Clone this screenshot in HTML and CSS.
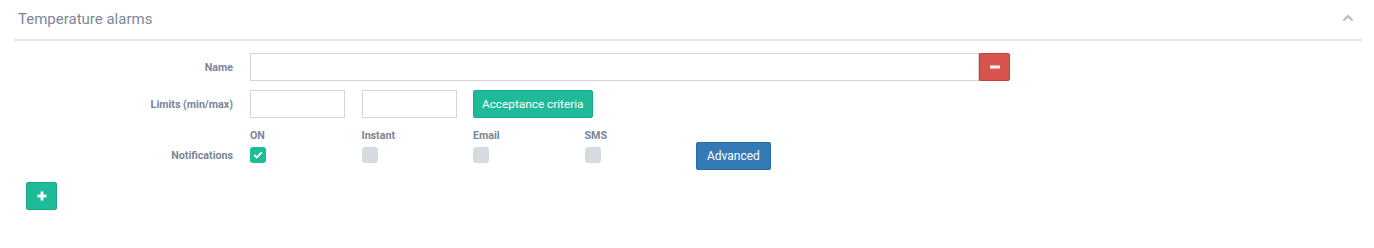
FILE: index.html
```html
<!DOCTYPE html>
<html lang="en">
<head>
    <meta charset="UTF-8">
    <title>Temperature alarms</title>
    <link rel="stylesheet" href="styles.css">
</head>
<body>
    <div class="panel">
        <div class="panel-header">
            <span class="panel-title">Temperature alarms</span>
            <svg class="chevron" width="12" height="8" viewBox="0 0 12 8"><path d="M1.5 6.5 L6 2 L10.5 6.5" fill="none" stroke="#b8bec6" stroke-width="2.2"/></svg>
        </div>

        <div class="alarm">
            <div class="form-row">
                <label class="row-label">Name</label>
                <div class="input-group">
                    <input type="text" class="name-input">
                    <button class="btn btn-danger btn-icon">
                        <svg width="12" height="12" viewBox="0 0 12 12"><rect x="1" y="4.5" width="10" height="3" fill="#fff"/></svg>
                    </button>
                </div>
            </div>

            <div class="form-row">
                <label class="row-label">Limits (min/max)</label>
                <div class="cols">
                    <input type="text" class="small-input">
                    <input type="text" class="small-input">
                    <button class="btn btn-success btn-criteria">Acceptance criteria</button>
                </div>
            </div>

            <div class="form-row notif-row">
                <label class="row-label">Notifications</label>
                <div class="cols">
                    <div class="check-col">
                        <span class="check-title">ON</span>
                        <span class="checkbox checked">
                            <svg width="10" height="8" viewBox="0 0 10 8"><path d="M1.2 4 L3.8 6.4 L8.8 1.4" fill="none" stroke="#fff" stroke-width="1.8"/></svg>
                        </span>
                    </div>
                    <div class="check-col">
                        <span class="check-title">Instant</span>
                        <span class="checkbox"></span>
                    </div>
                    <div class="check-col">
                        <span class="check-title">Email</span>
                        <span class="checkbox"></span>
                    </div>
                    <div class="check-col">
                        <span class="check-title">SMS</span>
                        <span class="checkbox"></span>
                    </div>
                    <div class="check-col advanced-col">
                        <button class="btn btn-primary">Advanced</button>
                    </div>
                </div>
            </div>
        </div>

        <button class="btn btn-success btn-icon add-btn">
            <svg width="12" height="12" viewBox="0 0 12 12"><rect x="1.5" y="4.6" width="9" height="2.8" fill="#fff"/><rect x="4.6" y="1.5" width="2.8" height="9" fill="#fff"/></svg>
        </button>
    </div>
</body>
</html>
```

FILE: styles.css
```css
body {
    margin: 0;
    font-family: Roboto, "Liberation Sans", sans-serif;
    background: #fff;
    color: #333;
}
.panel {
    margin: 0 12px 0 14px;
}
.panel-header {
    display: flex;
    align-items: center;
    justify-content: space-between;
    height: 39px;
    border-bottom: 2px solid #e7e8ef;
    padding: 0 8px 0 4px;
}
.panel-title {
    font-size: 15px;
    color: #7b8898;
    margin-top: -1px;
}
.chevron {
    margin-top: -3px;
}
.alarm {
    padding-top: 12px;
}
.form-row {
    display: flex;
    align-items: center;
    margin-bottom: 9px;
}
.row-label {
    width: 219px;
    margin-right: 17px;
    padding-top: 1px;
    text-align: right;
    font-size: 10.7px;
    font-weight: bold;
    color: #7a8595;
}
.input-group {
    display: flex;
}
input {
    box-sizing: border-box;
    height: 28px;
    border: 1px solid #d5d5d5;
    padding: 4px 8px;
    font-family: inherit;
    outline: none;
}
.name-input {
    width: 729px;
}
.small-input {
    width: 95px;
}
.cols {
    display: grid;
    grid-template-columns: repeat(5, 95.5px);
    column-gap: 16px;
    align-items: center;
}
.cols > .btn {
    justify-self: start;
}
.btn {
    box-sizing: border-box;
    height: 28px;
    border: none;
    border-radius: 2px;
    padding: 0 10px;
    font-family: inherit;
    font-size: 12px;
    color: #fff;
    cursor: pointer;
    white-space: nowrap;
}
.btn-criteria {
    padding: 0 8px;
    font-size: 11.8px;
}
.btn-success {
    background-color: #1fbb99;
    border: 1px solid #19a889;
}
.btn-danger {
    background-color: #d9534f;
    border: 1px solid #c9403c;
}
.btn-primary {
    background-color: #337ab7;
    border: 1px solid #2a6aa2;
}
.btn-icon {
    width: 31px;
    min-height: 28px;
    padding: 0;
    display: flex;
    align-items: center;
    justify-content: center;
}
.input-group .btn-icon {
    border-radius: 0 2px 2px 0;
}
.notif-row {
    margin-top: 9px;
    align-items: flex-end;
}
.notif-row .row-label {
    margin-bottom: 1px;
}
.check-col {
    display: flex;
    flex-direction: column;
    align-items: flex-start;
}
.check-title {
    font-size: 10.7px;
    font-weight: bold;
    color: #7a8595;
    margin-bottom: 5px;
    padding-top: 2px;
}
.checkbox {
    width: 16px;
    height: 16px;
    border-radius: 3px;
    background-color: #d6dbe0;
    display: flex;
    align-items: center;
    justify-content: center;
}
.checkbox.checked {
    background-color: #1fbb99;
}
.advanced-col {
    align-self: end;
    margin-bottom: -7px;
}
.add-btn {
    margin: 19px 0 0 12px;
}
```
